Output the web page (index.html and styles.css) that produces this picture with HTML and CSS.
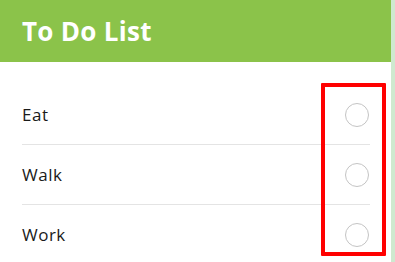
FILE: index.html
```html
<!DOCTYPE html>
<html>
<head>
<meta charset="utf-8">
<link rel="stylesheet" href="styles.css">
</head>
<body>
<div class="app">
  <header class="header"><h1 class="title">To Do List</h1></header>
  <ul class="list">
    <li class="item"><span class="label">Eat</span><span class="check"></span></li>
    <li class="item"><span class="label">Walk</span><span class="check"></span></li>
    <li class="item"><span class="label">Work</span><span class="check"></span></li>
  </ul>
  <div class="highlight"></div>
</div>
</body>
</html>
```
FILE: styles.css
```css
html, body {
  margin: 0;
  padding: 0;
  background: #ffffff;
}
.app {
  position: relative;
  width: 391px;
  height: 262px;
  border-right: 4px solid #cfe9cf;
  font-family: "Open Sans", "Liberation Sans", sans-serif;
  overflow: hidden;
}
.header {
  height: 62px;
  background: #8bc34a;
  display: flex;
  align-items: center;
  padding-left: 22px;
}
.title {
  margin: 0;
  color: #ffffff;
  font-size: 26px;
  font-weight: 700;
  letter-spacing: 0.3px;
}
.list {
  list-style: none;
  margin: 0;
  padding: 23px 21px 0 22px;
}
.item {
  height: 59px;
  display: flex;
  align-items: center;
  justify-content: space-between;
  border-bottom: 1px solid #e4e4e4;
}
.item:last-child {
  border-bottom: none;
}
.label {
  font-size: 17px;
  color: #1a1a1a;
  letter-spacing: 0.5px;
}
.check {
  width: 22px;
  height: 22px;
  border: 1px solid #c4c4c4;
  border-radius: 50%;
  margin-right: 1px;
}
.highlight {
  position: absolute;
  left: 321px;
  top: 83px;
  width: 57px;
  height: 165px;
  border: 4px solid #ff0000;
  border-radius: 1px;
}
```
